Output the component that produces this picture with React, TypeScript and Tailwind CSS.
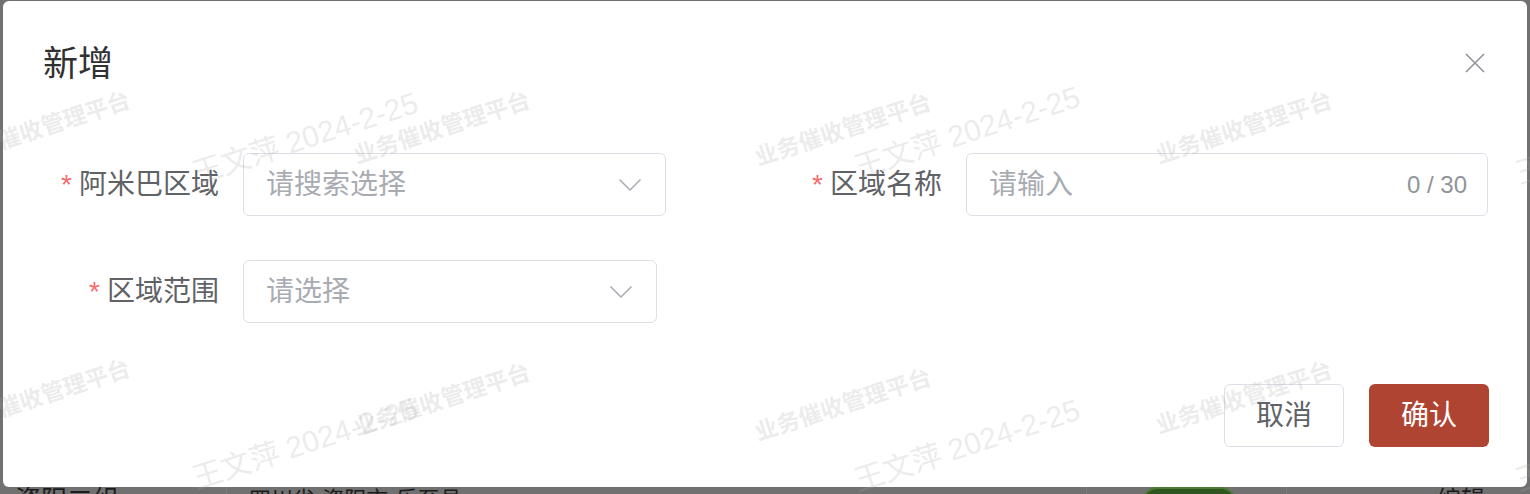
type Mark = { text: string; x: number; y: number; big?: boolean };

const brand = "业务催收管理平台";
const owner = "王文萍 2024-2-25";

const marks: Mark[] = [
  { text: brand, x: 42, y: 128 },
  { text: brand, x: 442, y: 128 },
  { text: brand, x: 843, y: 130 },
  { text: brand, x: 1244, y: 128 },
  { text: brand, x: 42, y: 396 },
  { text: brand, x: 442, y: 400 },
  { text: brand, x: 843, y: 405 },
  { text: brand, x: 1244, y: 398 },
  { text: owner, x: 305, y: 138, big: true },
  { text: owner, x: 967, y: 132, big: true },
  { text: owner, x: 1628, y: 138, big: true },
  { text: owner, x: 305, y: 443, big: true },
  { text: owner, x: 967, y: 445, big: true },
  { text: owner, x: 1628, y: 445, big: true },
];

function Chevron() {
  return (
    <svg width="24" height="14" viewBox="0 0 24 14" fill="none" className="shrink-0">
      <path d="M1.5 1.5 L12 12 L22.5 1.5" stroke="#a8abb2" strokeWidth="1.5" strokeLinejoin="round" />
    </svg>
  );
}

function Label({ text }: { text: string }) {
  return (
    <label className="w-[240px] shrink-0 pr-[24px] text-right text-[28px] leading-[40px] text-[#606266]">
      <span className="mr-[7px] text-[#f56c6c]">*</span>
      {text}
    </label>
  );
}

function SelectBox({ placeholder, width }: { placeholder: string; width: string }) {
  return (
    <div
      className={`flex h-[63px] items-center justify-between rounded-[6px] border border-[#dcdfe6] bg-white pl-[22px] pr-[23px] ${width}`}
    >
      <span className="text-[28px] leading-[40px] text-[#a8abb2]">{placeholder}</span>
      <Chevron />
    </div>
  );
}

export default function App() {
  return (
    <div className="relative h-[494px] w-[1530px] overflow-hidden bg-[#717171] font-['Liberation_Sans','Noto_Sans_CJK_SC',sans-serif]">
      {/* table row of the page behind the overlay, only its top shows */}
      <div className="flex pt-[480px] text-[#1c1c1c]">
        <div className="h-[40px] w-[226px] pl-[15px] text-[26px] leading-[40px]">资阳二组</div>
        <div className="h-[40px] w-[252px] border-l border-[#7d7d7d] pl-[22px] text-[22px] leading-[40px]">
          四川省-资阳市-乐至县
        </div>
        <div className="h-[40px] w-[609px] border-r border-[#7d7d7d]" />
        <div className="flex h-[40px] w-[199px] items-start pl-[55px] pt-[7px]">
          <span className="h-[30px] w-[94px] rounded-full border-2 border-[#4d7a35] bg-[#2f5520]" />
        </div>
        <div className="h-[40px] border-l border-[#7d7d7d] pl-[150px] text-[24px] leading-[40px]">编辑</div>
      </div>

      {/* dialog */}
      <div className="absolute left-[3px] top-[1px] h-[486px] w-[1524px] rounded-[6px] bg-white">
        <div className="pl-[40px] pt-[42px]">
          <h2 className="text-[35px] font-normal leading-[42px] text-[#303133]">新增</h2>
        </div>
        <button type="button" className="absolute right-[42px] top-[52px]">
          <svg width="20" height="20" viewBox="0 0 20 20" fill="none">
            <path d="M1 1 L19 19 M19 1 L1 19" stroke="#909399" strokeWidth="1.6" />
          </svg>
        </button>

        <div className="pt-[68px]">
          <div className="flex h-[63px] items-center">
            <Label text="阿米巴区域" />
            <SelectBox placeholder="请搜索选择" width="w-[423px]" />
            <div className="w-[60px]" />
            <Label text="区域名称" />
            <div className="flex h-[63px] w-[522px] items-center justify-between rounded-[6px] border border-[#dcdfe6] bg-white pl-[22px] pr-[20px]">
              <span className="text-[28px] leading-[40px] text-[#a8abb2]">请输入</span>
              <span className="text-[24px] leading-[40px] text-[#909399]">0 / 30</span>
            </div>
          </div>

          <div className="mt-[44px] flex h-[63px] items-center">
            <Label text="区域范围" />
            <SelectBox placeholder="请选择" width="w-[414px]" />
          </div>
        </div>

        <div className="mt-[61px] flex justify-end gap-[25px] pr-[38px]">
          <button
            type="button"
            className="h-[63px] w-[120px] rounded-[6px] border border-[#dcdfe6] bg-white text-[28px] text-[#606266]"
          >
            取消
          </button>
          <button
            type="button"
            className="h-[63px] w-[120px] rounded-[6px] bg-[#b04432] text-[28px] text-white"
          >
            确认
          </button>
        </div>
      </div>

      {/* watermark */}
      <div className="pointer-events-none absolute inset-0">
        {marks.map((m, i) => (
          <span
            key={i}
            className={`absolute -translate-x-1/2 -translate-y-1/2 -rotate-[18deg] whitespace-nowrap text-[rgba(170,170,170,0.24)] ${
              m.big ? "text-[30px]" : "text-[23px] font-bold"
            }`}
            style={{ left: m.x, top: m.y }}
          >
            {m.text}
          </span>
        ))}
      </div>
    </div>
  );
}
